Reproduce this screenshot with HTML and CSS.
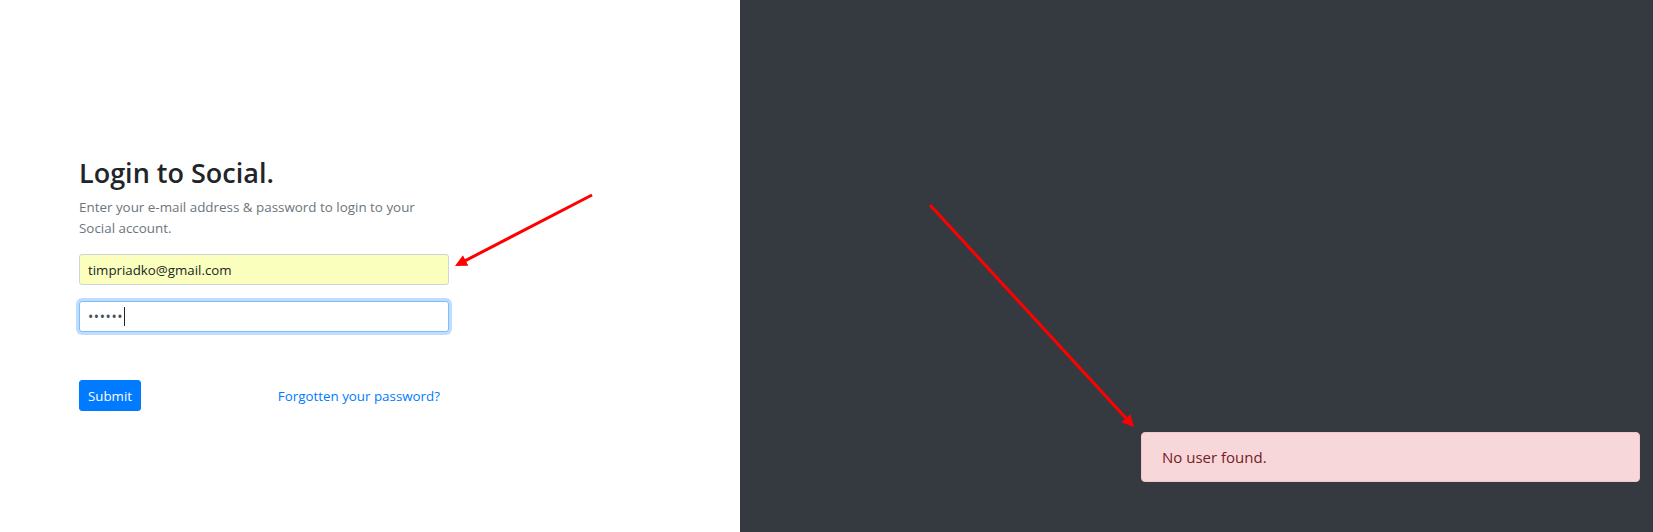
FILE: index.html
```html
<!DOCTYPE html>
<html lang="en">
<head>
<meta charset="utf-8">
<title>Login to Social</title>
<link rel="stylesheet" href="styles.css">
</head>
<body>
<div class="page">
  <section class="left">
    <form class="login">
      <h3 class="title">Login to Social.</h3>
      <p class="lead">Enter your e-mail address &amp; password to login to your Social account.</p>
      <div class="group">
        <input class="field autofill" type="email" value="timpriadko@gmail.com">
      </div>
      <div class="group">
        <div class="field focus"><span class="dots">••••••</span><span class="caret"></span></div>
      </div>
      <div class="actions">
        <button type="button" class="btn">Submit</button>
        <a class="link" href="#">Forgotten your password?</a>
      </div>
    </form>
  </section>
  <section class="right">
    <div class="alert">No user found.</div>
  </section>
  <svg class="arrows" width="1653" height="532" viewBox="0 0 1653 532">
    <defs>
      <marker id="head" markerWidth="4" markerHeight="4" refX="3" refY="2" orient="auto" markerUnits="strokeWidth">
        <path d="M0,0 L4,2 L0,4 Z" fill="#ff0000"/>
      </marker>
    </defs>
    <line x1="592" y1="195" x2="457.7" y2="264.6" stroke="#ff0000" stroke-width="3" marker-end="url(#head)"/>
    <line x1="930" y1="205" x2="1132" y2="424.8" stroke="#ff0000" stroke-width="3" marker-end="url(#head)"/>
  </svg>
</div>
</body>
</html>
```
FILE: styles.css
```css
* { box-sizing: border-box; }
html, body { margin: 0; padding: 0; }
body {
  font-family: "Open Sans", "Noto Sans", sans-serif;
  color: #212529;
  background: #fff;
}
.page {
  position: relative;
  display: flex;
  width: 1653px;
  height: 532px;
  overflow: hidden;
}
.left {
  width: 740px;
  background: #fff;
  padding: 157px 0 0 79px;
}
.login { width: 370px; }
.title {
  margin: 0 0 8px;
  font-size: 27px;
  font-weight: 600;
  line-height: 1.2;
  color: #212529;
}
.lead {
  margin: 0 0 15px;
  font-size: 13.4px;
  line-height: 21px;
  color: #6c757d;
  padding-right: 10px;
}
.group { margin-bottom: 16px; }
.field {
  display: flex;
  align-items: center;
  width: 100%;
  height: 31px;
  padding: 4px 8px;
  font-family: inherit;
  font-size: 13.3px;
  color: #212529;
  border: 1px solid #ced4da;
  border-radius: 3px;
  background: #fff;
  outline: none;
}
.autofill { background: #faffbd; }
.focus {
  border-color: #80bdff;
  box-shadow: 0 0 0 3px rgba(0, 123, 255, .25);
}
.dots { letter-spacing: 0.6px; font-size: 14px; color: #495057; }
.caret {
  display: inline-block;
  width: 1px;
  height: 19px;
  margin-left: 1px;
  background: #212529;
}
.actions {
  display: flex;
  justify-content: space-between;
  align-items: center;
  margin-top: 48px;
  padding-right: 9px;
}
.btn {
  height: 31px;
  padding: 4px 8px;
  font-family: inherit;
  font-size: 13.3px;
  color: #fff;
  background: #007bff;
  border: 1px solid #007bff;
  border-radius: 3px;
}
.link {
  font-size: 13.35px;
  color: #007bff;
  text-decoration: none;
}
.right {
  flex: 1;
  background: #343a40;
  display: flex;
  justify-content: flex-end;
  align-items: flex-end;
  padding: 0 13px 50px 0;
}
.alert {
  width: 499px;
  height: 50px;
  padding: 12px 20px;
  font-size: 15px;
  line-height: 24px;
  color: #721c24;
  background: #f8d7da;
  border: 1px solid #f5c6cb;
  border-radius: 4px;
}
.arrows {
  position: absolute;
  left: 0;
  top: 0;
  pointer-events: none;
}
```
